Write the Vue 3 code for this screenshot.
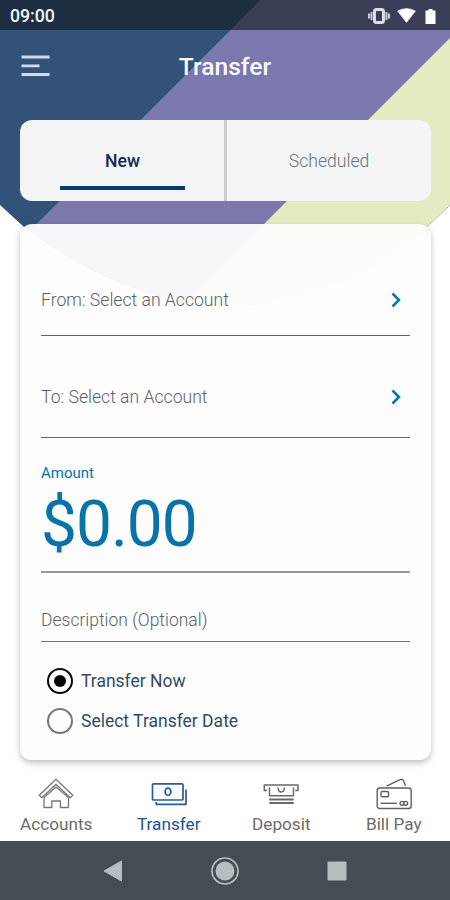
<script setup>
import { ref } from 'vue'

const tab = ref('New')
const when = ref('Transfer Now')
const tabs = ['New', 'Scheduled']
const accounts = [
  { text: 'From: Select an Account', kind: 'from' },
  { text: 'To: Select an Account', kind: 'to' },
]
const options = ['Transfer Now', 'Select Transfer Date']
</script>

<template>
  <div class="screen">
    <svg class="backdrop" width="450" height="320" viewBox="0 0 450 320" aria-hidden="true">
      <defs>
        <clipPath id="shape">
          <path d="M0 0H450V205L427 227Q330 306 225 306Q125 304 24 227L0 205Z" />
        </clipPath>
      </defs>
      <g clip-path="url(#shape)">
        <rect width="450" height="320" fill="#32527a" />
        <path d="M260.500 0H450V320H-59.500Z" fill="#7b78ad" />
        <path d="M488 0V320H168Z" fill="#e2ecc0" />
      </g>
    </svg>

    <div class="status">
      <span class="clock">09:00</span>
      <svg class="status-icons" width="70" height="18" viewBox="0 0 70 18">
        <path d="M1 6.500v5M3.500 5v8M18.500 5v8M21 6.500v5" stroke="#c8c8d6" stroke-width="2" />
        <rect x="6.500" y="2.500" width="9" height="13" rx="2" fill="none" stroke="#dcdce6" stroke-width="3" />
        <path d="M29.500 4Q38.500-1 47.500 4L38.500 15.500Z" fill="#fff" stroke="#fff" stroke-width=".5" stroke-linejoin="round" />
        <path d="M57.500 3.500h3V2h4v1.500h3V17h-10Z" fill="#fff" />
      </svg>
    </div>

    <header class="header">
      <svg class="menu" width="29" height="22" viewBox="0 0 29 22">
        <path d="M.5 2H28.500M.5 10.800H18.500M.5 19.500H28.500" stroke="#cfdaea" stroke-width="2.800" />
      </svg>
      <h1 class="title">Transfer</h1>
    </header>

    <div class="tabs">
      <button v-for="t in tabs" :key="t" class="tab" :class="{ active: tab === t }" @click="tab = t">
        <span>{{ t }}</span>
      </button>
    </div>

    <main class="card">
      <div v-for="a in accounts" :key="a.kind" class="row" :class="a.kind">
        <span>{{ a.text }}</span>
        <svg class="chevron" width="10" height="16" viewBox="0 0 10 16">
          <path d="M1.500 1.500L8 8L1.500 14.500" fill="none" stroke="#0872a9" stroke-width="2.500" />
        </svg>
      </div>
      <div class="amount">
        <span class="amount-label">Amount</span>
        <span class="amount-value">$0.00</span>
      </div>
      <div class="row description"><span>Description (Optional)</span></div>
      <div class="options">
        <div v-for="o in options" :key="o" class="option" @click="when = o">
          <span class="radio" :class="{ checked: when === o }"></span>
          <span class="option-text">{{ o }}</span>
        </div>
      </div>
    </main>

    <nav class="nav">
      <div class="item">
        <svg width="36" height="33" viewBox="0 0 36 33" fill="none" stroke="#777" stroke-width="1.300" stroke-linejoin="round">
          <path d="M18 2.300L1.200 18.300L3.800 20.800L18 7.300L32.200 20.800L34.800 18.300Z" />
          <path d="M6 20.500V30.500H13.800V24H22.400V30.500H30.500V20.500M6 20.500L18 10L30.500 20.500" />
        </svg>
        <span>Accounts</span>
      </div>
      <div class="item current">
        <svg width="36" height="33" viewBox="0 0 36 33" fill="none" stroke="#2b5c98" stroke-width="1.700" stroke-linejoin="round">
          <rect x="1.500" y="6.800" width="30.500" height="16.200" rx="1" />
          <ellipse cx="17" cy="14.700" rx="2.900" ry="3.600" />
          <path d="M5.200 25V27.300H35V12.500" />
        </svg>
        <span>Transfer</span>
      </div>
      <div class="item">
        <svg width="36" height="33" viewBox="0 0 36 33" fill="none" stroke="#686868" stroke-width="1.500" stroke-linejoin="round">
          <path d="M4 13.500H1.300V8H35V13.500H32.300M6.500 10.500V18.800H30.500V10.500" />
          <path d="M15 10.500Q15.300 15 18.200 15Q21.100 15 21.500 10.500" />
          <path d="M6.300 22.500H30.700M6.300 26H30.700" stroke-width="1.900" />
        </svg>
        <span>Deposit</span>
      </div>
      <div class="item">
        <svg width="36" height="33" viewBox="0 0 36 33" fill="none" stroke="#606060" stroke-width="1.400" stroke-linejoin="round">
          <rect x="1.200" y="11" width="34" height="20.500" rx="2.500" />
          <rect x="5" y="14.500" width="7.500" height="5.300" rx="1" />
          <path d="M10.500 9.200L23.500 2.800Q26.500 1.500 27.700 4.300L29.500 8.800" />
          <path d="M4.500 26.300H21" />
          <circle cx="26" cy="26.300" r="1.900" /><circle cx="29.700" cy="26.300" r="1.900" />
        </svg>
        <span>Bill Pay</span>
      </div>
    </nav>

    <footer class="system">
      <svg width="20" height="22" viewBox="0 0 20 22"><path d="M1 11L18.500 1V21Z" fill="#b6bec1" stroke="#b6bec1" stroke-linejoin="round" /></svg>
      <svg width="30" height="30" viewBox="0 0 30 30"><circle cx="15" cy="15" r="13" fill="none" stroke="#b6bec1" stroke-width="1.700" /><circle cx="15" cy="15" r="9.500" fill="#b6bec1" /></svg>
      <svg width="20" height="20" viewBox="0 0 20 20"><rect x=".5" y=".5" width="19" height="19" rx="1" fill="#b6bec1" /></svg>
    </footer>
  </div>
</template>

<style>
body { margin: 0; }
</style>

<style scoped>
.screen {
  position: relative;
  width: 450px;
  height: 900px;
  overflow: hidden;
  display: flex;
  flex-direction: column;
  background: #fff;
  font-family: Roboto, sans-serif;
  isolation: isolate;
}
.backdrop { position: absolute; inset: 0 auto auto 0; z-index: -1; }
.status {
  height: 30px;
  box-sizing: border-box;
  display: flex;
  align-items: center;
  justify-content: space-between;
  padding: 1px 12px 0 10px;
  background: rgba(15, 22, 28, .59);
}
.clock { color: #f2f5f8; font-size: 17.7px; font-weight: 500; line-height: 20px; }
.header {
  height: 90px;
  box-sizing: border-box;
  display: grid;
  grid-template-columns: 50px 1fr 50px;
  padding: 0 21px;
}
.menu { margin: 25px 0 0; }
.title {
  margin: 21px 0 0;
  text-align: center;
  color: #fafaff;
  font-size: 24.6px;
  line-height: 32px;
  font-weight: 500;
}
.tabs {
  display: grid;
  grid-template-columns: 204px 1fr;
  width: 411px;
  height: 81px;
  margin-left: 20px;
  border-radius: 12px;
  overflow: hidden;
  background: #f2f4f6;
}
.tab {
  box-sizing: border-box;
  display: flex;
  flex-direction: column;
  align-items: center;
  padding: 30px 0 0;
  border: 0;
  background: none;
  color: #68717b;
  font: 300 17.6px/22px Roboto, sans-serif;
}
.tab + .tab { border-left: 3px solid #c9cbce; }
.tab.active { padding-left: 1px; color: #142c50; font-weight: 500; }
.tab.active::after {
  content: '';
  width: 125px;
  height: 4px;
  margin-top: 14px;
  background: #063b75;
}
.card {
  width: 411px;
  height: 536px;
  box-sizing: border-box;
  margin: 23px 0 0 20px;
  padding: 0 21px;
  border-radius: 12px;
  background: rgba(253, 253, 253, .955);
  box-shadow: 0 3px 6px rgba(0, 0, 0, .25);
}
.row {
  box-sizing: border-box;
  display: flex;
  align-items: center;
  justify-content: space-between;
  border-bottom: 1px solid #606269;
  color: #596269;
  font-size: 17.6px;
  font-weight: 300;
  line-height: 22px;
}
.from { height: 112px; padding-top: 40px; }
.to { height: 102px; padding-top: 20px; }
.chevron { margin-right: 9px; }
.amount {
  height: 135px;
  box-sizing: border-box;
  display: flex;
  flex-direction: column;
  padding-top: 25px;
  border-bottom: 2px solid #96989b;
  color: #0872a9;
}
.amount-label { font-size: 15px; line-height: 20px; }
.amount-value { font-size: 64px; line-height: 76px; margin-top: 4px; letter-spacing: -1px; }
.description { height: 69px; padding-top: 25px; border-color: #707276; font-size: 17.5px; }
.options { display: flex; flex-direction: column; gap: 14px; padding: 26px 0 0 6px; }
.option { display: flex; align-items: center; gap: 8px; height: 26px; }
.radio {
  width: 26px;
  height: 26px;
  box-sizing: border-box;
  display: grid;
  place-items: center;
  border: 2px solid #777;
  border-radius: 50%;
}
.radio.checked { border-color: #080808; }
.radio.checked::after {
  content: '';
  width: 12px;
  height: 12px;
  border-radius: 50%;
  background: #080808;
}
.option-text { color: #354a60; font-size: 17.5px; line-height: 22px; }
.nav {
  height: 81px;
  display: grid;
  grid-template-columns: repeat(4, 1fr);
}
.item {
  display: flex;
  flex-direction: column;
  align-items: center;
  padding-top: 17px;
  color: #6b6b6b;
  font-size: 17.2px;
  line-height: 22px;
}
.item svg { margin-bottom: 3px; }
.current { color: #24528f; }
.system {
  height: 59px;
  display: flex;
  align-items: center;
  justify-content: space-between;
  box-sizing: border-box;
  padding: 0 103px;
  background: #454d52;
}
</style>
